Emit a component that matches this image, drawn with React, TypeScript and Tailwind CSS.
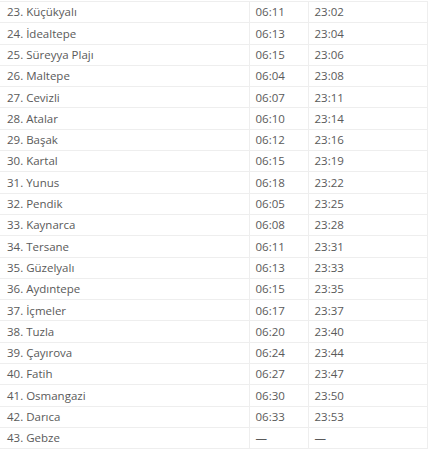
const rows: [string, string, string][] = [
  ['23. Küçükyalı', '06:11', '23:02'],
  ['24. İdealtepe', '06:13', '23:04'],
  ['25. Süreyya Plajı', '06:15', '23:06'],
  ['26. Maltepe', '06:04', '23:08'],
  ['27. Cevizli', '06:07', '23:11'],
  ['28. Atalar', '06:10', '23:14'],
  ['29. Başak', '06:12', '23:16'],
  ['30. Kartal', '06:15', '23:19'],
  ['31. Yunus', '06:18', '23:22'],
  ['32. Pendik', '06:05', '23:25'],
  ['33. Kaynarca', '06:08', '23:28'],
  ['34. Tersane', '06:11', '23:31'],
  ['35. Güzelyalı', '06:13', '23:33'],
  ['36. Aydıntepe', '06:15', '23:35'],
  ['37. İçmeler', '06:17', '23:37'],
  ['38. Tuzla', '06:20', '23:40'],
  ['39. Çayırova', '06:24', '23:44'],
  ['40. Fatih', '06:27', '23:47'],
  ['41. Osmangazi', '06:30', '23:50'],
  ['42. Darıca', '06:33', '23:53'],
  ['43. Gebze', '—', '—'],
]

export default function App() {
  return (
    <div className="h-[450px] w-[435px] overflow-hidden bg-white pt-px font-['Open_Sans',sans-serif] text-[11.5px] text-[#5a5a5a]">
      <table className="w-[428px] table-fixed border-collapse">
        <colgroup>
          <col className="w-[249px]" />
          <col className="w-[59px]" />
          <col />
        </colgroup>
        <tbody>
          {rows.map((r) => (
            <tr key={r[0]} className="h-[21.3px] border-y border-[#eeeeee]">
              <td className="pl-[7px] leading-none">{r[0]}</td>
              <td className="border-l border-[#eeeeee] pl-[6px] leading-none">{r[1]}</td>
              <td className="border-x border-[#eeeeee] pl-[6px] leading-none">{r[2]}</td>
            </tr>
          ))}
        </tbody>
      </table>
    </div>
  )
}
